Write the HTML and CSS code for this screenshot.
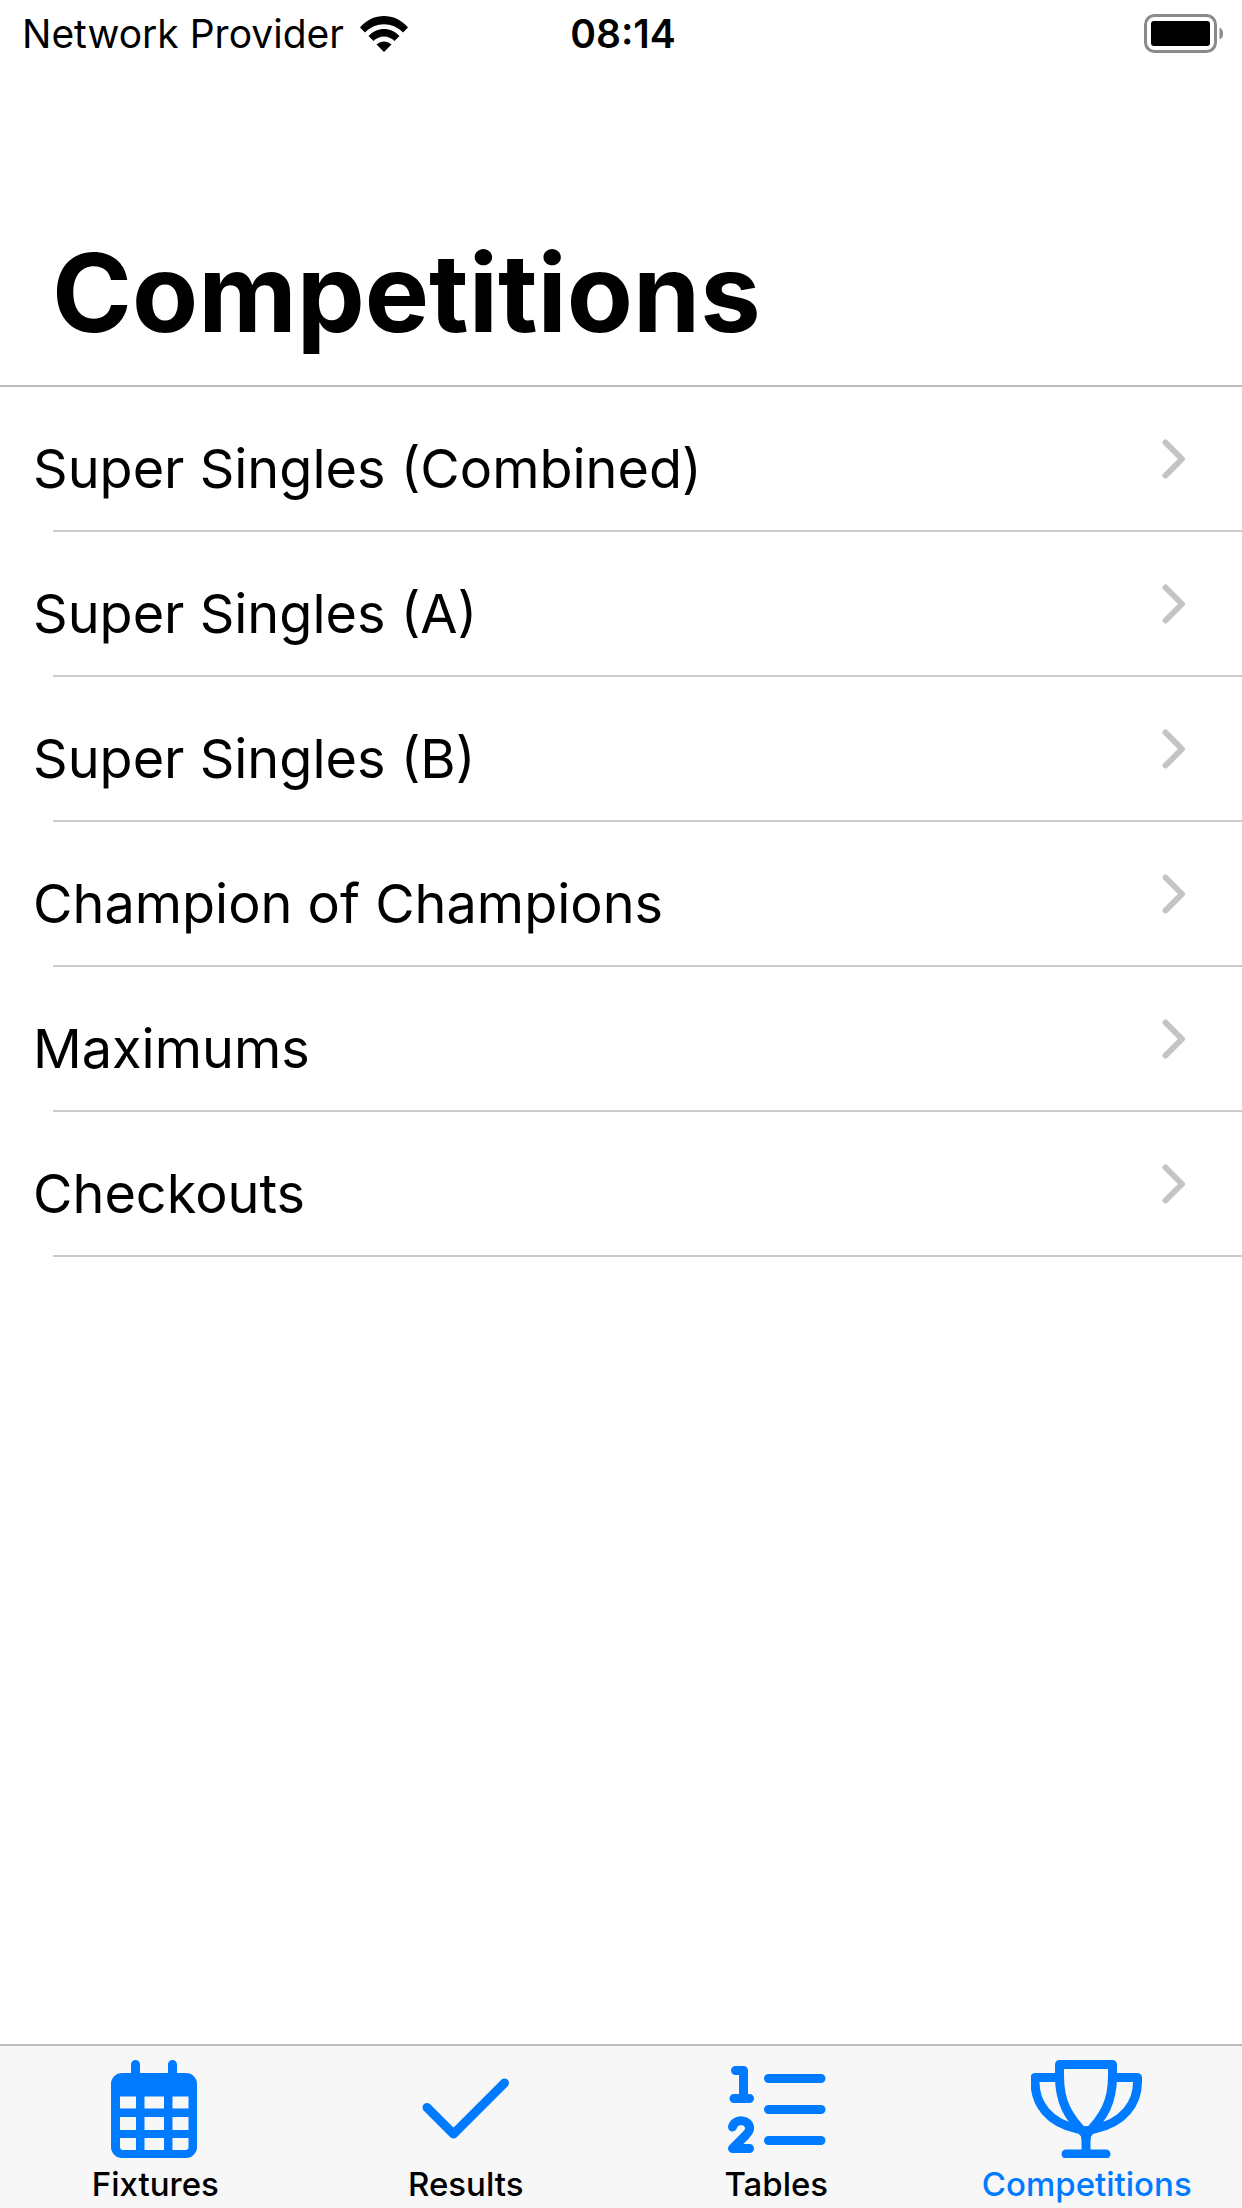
FILE: index.html
```html
<!DOCTYPE html>
<html lang="en">
<head>
    <meta charset="UTF-8">
    <meta name="viewport" content="width=device-width, initial-scale=1.0">
    <title>Competitions</title>
    <link rel="stylesheet" href="styles.css">
</head>
<body>
    <div class="status-bar">
        <div class="carrier">
            <span>Network Provider</span>
            <svg class="wifi" viewBox="0 0 48 36" aria-hidden="true">
                <path d="M0 11.500C13-3.800 35-3.800 48 11.500L43 16.500C32.500 5.500 15.500 5.500 5 16.500Z"/>
                <path d="M8.500 20C17 10.500 31 10.500 39.500 20L34.500 25C28.500 19 19.500 19 13.500 25Z"/>
                <path d="M16.500 28.500C21 24.500 27 24.500 31.500 28.500L24 36Z"/>
            </svg>
        </div>
        <div class="time">08:14</div>
        <div class="power">
            <svg class="battery" viewBox="0 0 80 40" aria-hidden="true">
                <rect x="1.500" y="1.500" width="70" height="36" rx="9" fill="none" stroke="#8a8a8a" stroke-width="3"/>
                <rect x="7" y="7" width="59" height="25" rx="3"/>
                <path d="M75.500 13.500Q79 15 79 19.500T75.500 25.500Z" fill="#8a8a8a"/>
            </svg>
        </div>
    </div>

    <header class="header">
        <h1>Competitions</h1>
    </header>

    <main>
        <ul class="list">
            <li><a href="#"><span>Super Singles (Combined)</span><svg class="chevron" viewBox="0 0 24 40" aria-hidden="true"><path d="M3.500 3.500L20 20L3.500 36.500"/></svg></a></li>
            <li><a href="#"><span>Super Singles (A)</span><svg class="chevron" viewBox="0 0 24 40" aria-hidden="true"><path d="M3.500 3.500L20 20L3.500 36.500"/></svg></a></li>
            <li><a href="#"><span>Super Singles (B)</span><svg class="chevron" viewBox="0 0 24 40" aria-hidden="true"><path d="M3.500 3.500L20 20L3.500 36.500"/></svg></a></li>
            <li><a href="#"><span>Champion of Champions</span><svg class="chevron" viewBox="0 0 24 40" aria-hidden="true"><path d="M3.500 3.500L20 20L3.500 36.500"/></svg></a></li>
            <li><a href="#"><span>Maximums</span><svg class="chevron" viewBox="0 0 24 40" aria-hidden="true"><path d="M3.500 3.500L20 20L3.500 36.500"/></svg></a></li>
            <li><a href="#"><span>Checkouts</span><svg class="chevron" viewBox="0 0 24 40" aria-hidden="true"><path d="M3.500 3.500L20 20L3.500 36.500"/></svg></a></li>
        </ul>
    </main>

    <nav class="tab-bar">
        <a class="tab" href="#">
            <svg viewBox="0 0 112 98" aria-hidden="true">
                <path fill="currentColor" fill-rule="evenodd" d="M23 13H87A11 11 0 0 1 98 24V87A11 11 0 0 1 87 98H23A11 11 0 0 1 12 87V24A11 11 0 0 1 23 13ZM21 36.500V48.500H37V36.500ZM45.500 36.500V48.500H65V36.500ZM73.500 36.500V48.500H89.500V36.500ZM21 57V70H37V57ZM45.500 57V70H65V57ZM73.500 57V70H89.500V57ZM21 78V87Q21 90 24 90H37V78ZM45.500 78V90H65V78ZM73.500 78V90H86.500Q89.500 90 89.500 87V78Z"/>
                <path class="line" d="M36.500 4.500V20M73.500 4.500V20"/>
            </svg>
            <span>Fixtures</span>
        </a>
        <a class="tab" href="#">
            <svg viewBox="0 0 112 98" aria-hidden="true">
                <path class="line" d="M17 47.500L43.500 74L94.500 23"/>
            </svg>
            <span>Results</span>
        </a>
        <a class="tab" href="#">
            <svg viewBox="0 0 112 98" aria-hidden="true">
                <path class="line" d="M48.500 18.500H101M48.500 49.500H101M48.500 80.500H101"/>
                <path class="line" d="M15.500 10.500H23.500V38.500M14 38.500H29.500"/>
                <path class="line" d="M12.500 67C14.500 58 30.500 59 29.500 69C29.500 73 17.500 83 12.500 88.500H29.500"/>
            </svg>
            <span>Tables</span>
        </a>
        <a class="tab active" href="#" aria-current="page">
            <svg viewBox="0 0 112 98" aria-hidden="true">
                <path class="line" d="M28.500 4.500H81.500V16C81.500 42 73 57 55 75C37 57 28.500 42 28.500 16Z"/>
                <path class="line" d="M28.500 17.500H4V22C4 43 17 63 47 69M81.500 17.500H106.500V22C106.500 43 93 63 63 69M35 94H75M55 74V94"/>
                <path fill="currentColor" d="M43 68Q50.500 71 50.500 80H59.500Q59.500 71 67 68L55 66Z"/>
            </svg>
            <span>Competitions</span>
        </a>
    </nav>
</body>
</html>
```
FILE: styles.css
```css
* {
    box-sizing: border-box;
}

body {
    margin: 0;
    min-height: 100vh;
    display: flex;
    flex-direction: column;
    background-color: #fff;
    color: #000;
    font-family: Inter, "Liberation Sans", sans-serif;
}

.status-bar {
    display: grid;
    grid-template-columns: 1fr auto 1fr;
    align-items: center;
    padding: 12px 18px 12px 22px;
    font-size: 39px;
    line-height: 44px;
}

.carrier {
    display: flex;
    align-items: center;
    gap: 16px;
}

.wifi {
    width: 48px;
    height: 36px;
}

.time {
    font-weight: 600;
}

.power {
    display: flex;
    justify-content: flex-end;
}

.battery {
    width: 80px;
    height: 40px;
}

.header {
    padding: 157px 52px 24px;
    border-bottom: 2px solid #bcbcbc;
}

h1 {
    margin: 0;
    font-size: 108px;
    font-weight: 700;
    line-height: 136px;
}

main {
    flex: 1;
}

.list {
    list-style: none;
    margin: 0;
    padding: 0;
}

.list li::after {
    content: "";
    display: block;
    height: 2px;
    margin-left: 53px;
    background-color: #cbcbcc;
}

.list a {
    display: flex;
    align-items: center;
    justify-content: space-between;
    height: 143px;
    padding: 0 56px 0 33px;
    color: inherit;
    font-size: 54px;
    line-height: 68px;
    text-decoration: none;
}

.list span {
    padding-top: 20px;
}

.chevron {
    width: 24px;
    height: 40px;
    fill: none;
    stroke: #c4c4c6;
    stroke-width: 6;
    stroke-linecap: round;
    stroke-linejoin: round;
}

.tab-bar {
    display: flex;
    border-top: 2px solid #bcbcbc;
    background-color: #f7f7f7;
}

.tab {
    flex: 1;
    display: flex;
    flex-direction: column;
    align-items: center;
    gap: 6px;
    padding: 14px 0 4px;
    color: #000;
    font-size: 33px;
    font-weight: 500;
    line-height: 40px;
    text-decoration: none;
}

.tab svg {
    width: 112px;
    height: 98px;
    color: #007aff;
}

.tab.active {
    color: #007aff;
}

.line {
    fill: none;
    stroke: currentColor;
    stroke-width: 9;
    stroke-linecap: round;
    stroke-linejoin: round;
}
```
